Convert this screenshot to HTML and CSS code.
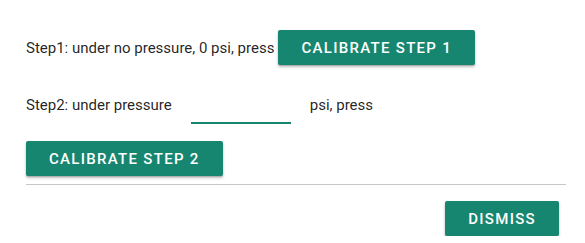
FILE: index.html
```html
<!DOCTYPE html>
<html>
<head>
<meta charset="utf-8">
<link rel="stylesheet" href="styles.css">
</head>
<body>
<div class="dialog">
  <div class="row row1">
    <span class="label">Step1: under no pressure, 0 psi, press</span>
    <button class="btn">Calibrate step 1</button>
  </div>
  <div class="row row2">
    <span class="label">Step2: under pressure</span>
    <span class="field"><input class="input" type="text"></span>
    <span class="label unit">psi, press</span>
  </div>
  <div class="row row3">
    <button class="btn">Calibrate step 2</button>
  </div>
  <hr class="divider">
  <div class="actions">
    <button class="btn">Dismiss</button>
  </div>
</div>
</body>
</html>
```

FILE: styles.css
```css
html, body {
  margin: 0;
  padding: 0;
  background: #ffffff;
}
body {
  font-family: Roboto, "Noto Sans", sans-serif;
  color: rgba(0, 0, 0, 0.87);
}
.dialog {
  padding: 30px 19px 0 26px;
}
.row {
  display: flex;
  align-items: center;
}
.label {
  font-size: 15px;
  line-height: 20px;
}
.row1 {
  height: 35px;
}
.row1 .btn {
  margin-left: 4px;
}
.row2 {
  margin-top: 23px;
  height: 42px;
  align-items: flex-start;
}
.row2 .label {
  padding-top: 7px;
}
.field {
  margin-left: 19px;
  width: 100px;
  height: 34px;
  border-bottom: 2px solid #168670;
}
.input {
  border: none;
  outline: none;
  width: 100%;
  height: 30px;
  padding: 0;
  background: transparent;
  font: inherit;
}
.unit {
  margin-left: 19px;
}
.row3 {
  margin-top: 11px;
}
.btn {
  font-family: Roboto, "Noto Sans", sans-serif;
  font-size: 15px;
  font-weight: 500;
  letter-spacing: 1.3px;
  text-transform: uppercase;
  color: #ffffff;
  background: #168670;
  border: none;
  border-radius: 2px;
  height: 35px;
  padding: 0 23px;
  box-shadow: 0 2px 3px rgba(0, 0, 0, 0.25), 0 1px 1px rgba(0, 0, 0, 0.14);
  cursor: pointer;
}
.divider {
  border: none;
  border-top: 1px solid #c6c6c6;
  margin: 8px 0 0 0;
}
.actions {
  display: flex;
  justify-content: flex-end;
  padding-top: 16px;
  padding-right: 7px;
}
```
